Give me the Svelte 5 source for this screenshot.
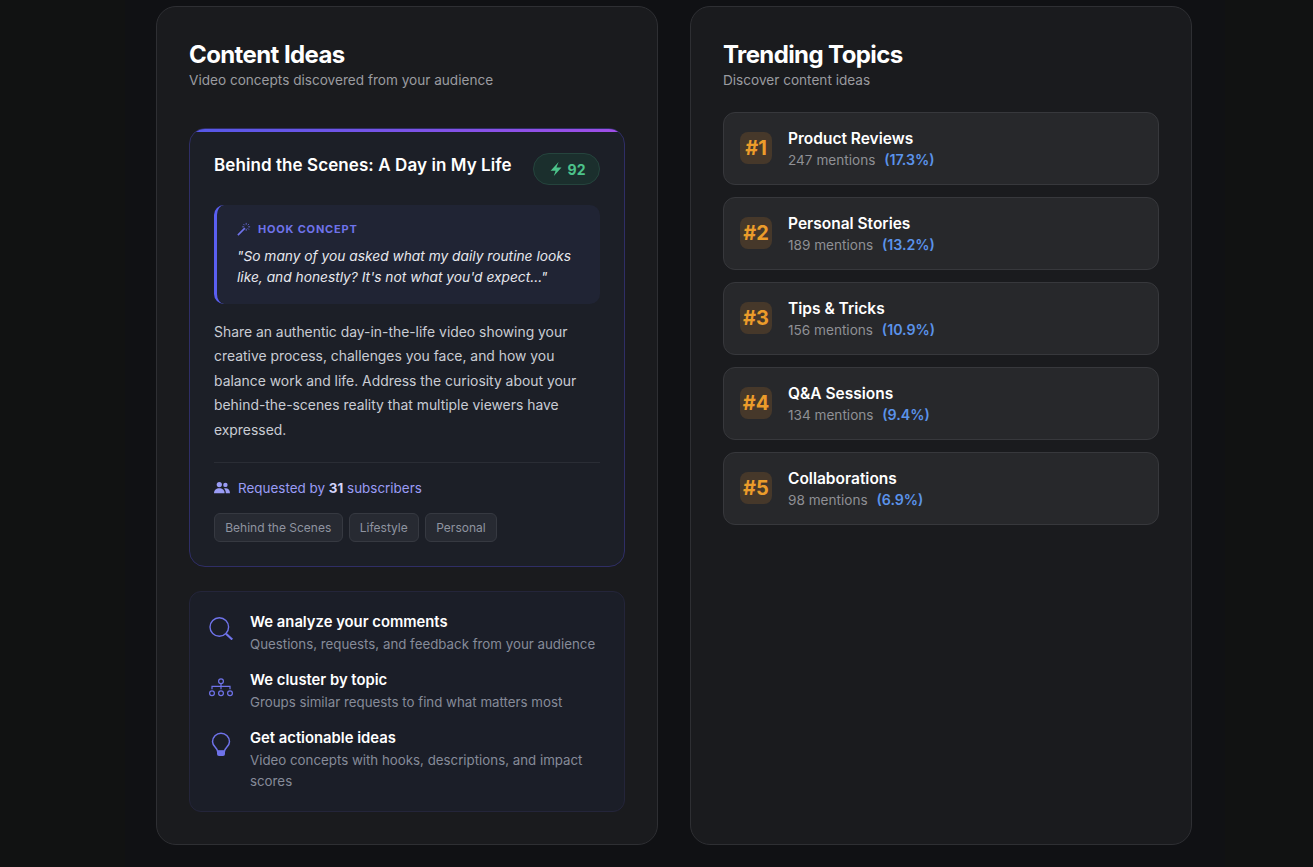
<script>
  const topics = [
    { rank: 1, name: "Product Reviews", mentions: 247, share: "17.3%" },
    { rank: 2, name: "Personal Stories", mentions: 189, share: "13.2%" },
    { rank: 3, name: "Tips & Tricks", mentions: 156, share: "10.9%" },
    { rank: 4, name: "Q&A Sessions", mentions: 134, share: "9.4%" },
    { rank: 5, name: "Collaborations", mentions: 98, share: "6.9%" },
  ];

  const tags = ["Behind the Scenes", "Lifestyle", "Personal"];

  const steps = [
    { icon: "search", title: "We analyze your comments", text: "Questions, requests, and feedback from your audience" },
    { icon: "cluster", title: "We cluster by topic", text: "Groups similar requests to find what matters most" },
    { icon: "bulb", title: "Get actionable ideas", text: "Video concepts with hooks, descriptions, and impact scores" },
  ];
</script>

<main class="page">
  <div class="columns">
    <section class="panel">
      <h2>Content Ideas</h2>
      <p class="sub">Video concepts discovered from your audience</p>

      <article class="idea">
        <div class="idea-head">
          <h3>Behind the Scenes: A Day in My Life</h3>
          <span class="score">
            <svg width="16" height="16" viewBox="0 0 16 16" fill="currentColor"><path d="M10.600 1 2.600 9.700h5L5.800 15 13.500 6.400H8.400z" /></svg>
            92
          </span>
        </div>

        <div class="hook">
          <div class="hook-label">
            <svg width="14" height="14" viewBox="0 0 16 16" fill="none" stroke="currentColor"><path d="M1 15 9 7" stroke-width="1.800" /><path d="M10.500 1v2.200M10.500 7.800V10M6 5.500h2.200M12.800 5.500H15M7.400 2.400l1.300 1.300M12.300 7.300l1.300 1.300M13.600 2.400l-1.300 1.300" stroke-width="0.900" /></svg>
            Hook Concept
          </div>
          <p>"So many of you asked what my daily routine looks like, and honestly? It's not what you'd expect..."</p>
        </div>

        <p class="desc">Share an authentic day-in-the-life video showing your creative process, challenges you face, and how you balance work and life. Address the curiosity about your behind-the-scenes reality that multiple viewers have expressed.</p>

        <div class="requested">
          <svg width="16" height="16" viewBox="0 0 16 16" fill="currentColor"><circle cx="5.300" cy="4.600" r="2.600" /><circle cx="11.400" cy="4.900" r="2.200" /><path d="M0 13.200C0 10 2.400 8.300 5.300 8.300S10.600 10 10.600 13.200z" /><path d="M11.800 13.200c0-1.900-.6-3.500-1.800-4.600.5-.2 1-.3 1.600-.3 2.500 0 4.400 1.600 4.400 4.900z" /></svg>
          <span>Requested by <b>31</b> subscribers</span>
        </div>

        <div class="tags">
          {#each tags as tag}
            <span class="tag">{tag}</span>
          {/each}
        </div>
      </article>

      <div class="how">
        {#each steps as step}
          <div class="step">
            <span class="step-icon">
              {#if step.icon === "search"}
                <svg width="24" height="24" viewBox="0 0 24 24" fill="none" stroke="currentColor"><circle cx="10.300" cy="11" r="9.300" stroke-width="1.400" /><path d="M17 17.800 23.300 23.500" stroke-width="2.200" /></svg>
              {:else if step.icon === "cluster"}
                <svg width="24" height="24" viewBox="0 0 24 24" fill="none" stroke="currentColor" stroke-width="1.200"><circle cx="12" cy="7.300" r="2.400" /><circle cx="3" cy="19.200" r="2.400" /><circle cx="12" cy="19.200" r="2.400" /><circle cx="21" cy="19.200" r="2.400" /><path d="M12 9.700v5.600M3 15.300v-3h18v3" /></svg>
              {:else}
                <svg width="24" height="24" viewBox="0 0 24 24" fill="none" stroke="currentColor"><path d="M8.500 19C8.300 15.800 3.500 14.200 3.500 9.800a8.500 8.500 0 0 1 17 0c0 4.400-4.800 6-5 9.200z" stroke-width="1.500" /><path d="M8 18.700h8v3.300a2 2 0 0 1-2 2h-4a2 2 0 0 1-2-2z" fill="currentColor" stroke="none" /></svg>
              {/if}
            </span>
            <div>
              <div class="step-title">{step.title}</div>
              <div class="step-text">{step.text}</div>
            </div>
          </div>
        {/each}
      </div>
    </section>

    <section class="panel">
      <h2>Trending Topics</h2>
      <p class="sub">Discover content ideas</p>

      <div class="topics">
        {#each topics as t}
          <div class="topic">
            <span class="rank">#{t.rank}</span>
            <div>
              <div class="topic-name">{t.name}</div>
              <div class="topic-meta">{t.mentions} mentions <span class="share">({t.share})</span></div>
            </div>
          </div>
        {/each}
      </div>
    </section>
  </div>
</main>

<style>
  :global(body) {
    margin: 0;
    background: #111212;
    font-family: Inter, "Liberation Sans", sans-serif;
    color: #fff;
  }
  .page {
    width: 1100px;
    height: 867px;
    margin-left: 125px;
    padding: 6px 32px 0 31px;
    box-sizing: border-box;
    background: #101114;
    overflow: hidden;
  }
  .columns {
    display: grid;
    grid-template-columns: 502px 502px;
    gap: 32px;
    height: 839px;
  }
  .panel {
    background: #1a1b1e;
    border: 1px solid #2e2f33;
    border-radius: 20px;
    padding: 33px 32px 32px;
    box-sizing: border-box;
  }
  h2 {
    margin: 0;
    font-size: 24px;
    line-height: 30px;
    font-weight: 700;
    letter-spacing: -0.6px;
  }
  .sub {
    margin: 0;
    font-size: 13.6px;
    line-height: 20px;
    color: #9a9ba0;
  }
  .idea {
    margin-top: 38px;
    height: 439px;
    box-sizing: border-box;
    padding: 24px;
    background: #1c1f27;
    border: 1px solid #2f2e66;
    border-radius: 16px;
    position: relative;
    overflow: hidden;
  }
  .idea::before {
    content: "";
    position: absolute;
    left: 0;
    right: 0;
    top: 0;
    height: 3px;
    background: linear-gradient(90deg, #5558e8, #a04ee8);
  }
  .idea-head {
    display: flex;
    justify-content: space-between;
    align-items: flex-start;
    gap: 16px;
  }
  h3 {
    margin: 0;
    font-size: 17px;
    line-height: 24px;
    font-weight: 600;
    letter-spacing: 0.08px;
    color: #fff;
  }
  .score {
    display: inline-flex;
    align-items: center;
    gap: 4px;
    height: 32px;
    box-sizing: border-box;
    padding: 0 13.5px;
    border: 1px solid #25443d;
    border-radius: 999px;
    background: #1b2f2d;
    color: #4cc38a;
    font-size: 14px;
    font-weight: 700;
  }
  .hook {
    margin-top: 20px;
    height: 99px;
    box-sizing: border-box;
    padding: 15px 20px;
    background: #202434;
    border-left: 3px solid #5a5ff0;
    border-radius: 10px;
  }
  .hook-label {
    display: flex;
    align-items: center;
    gap: 7px;
    font-size: 11px;
    line-height: 18px;
    font-weight: 700;
    letter-spacing: 0.8px;
    text-transform: uppercase;
    color: #6f73ea;
  }
  .hook p {
    margin: 8px 0 0;
    font-size: 13.75px;
    line-height: 21px;
    font-style: italic;
    color: #e7e8ee;
  }
  .desc {
    margin: 15.6px 0 0;
    font-size: 13.9px;
    line-height: 24.5px;
    color: #c9ccd4;
  }
  .requested {
    margin-top: 20px;
    padding-top: 15px;
    border-top: 1px solid #2a2d35;
    display: flex;
    align-items: center;
    gap: 8px;
    font-size: 13.44px;
    line-height: 20px;
    color: #9a9cf5;
  }
  .requested b {
    color: #d4d5fb;
    font-weight: 700;
  }
  .tags {
    margin-top: 15px;
    display: flex;
    gap: 6px;
  }
  .tag {
    height: 29px;
    box-sizing: border-box;
    padding: 0 10.25px;
    display: flex;
    align-items: center;
    font-size: 12px;
    color: #8f94a0;
    background: #272a32;
    border: 1px solid #363941;
    border-radius: 6px;
  }
  .how {
    margin-top: 24px;
    height: 221px;
    box-sizing: border-box;
    padding: 20px 20px 0;
    background: #1b1e28;
    border: 1px solid #24253a;
    border-radius: 12px;
    display: flex;
    flex-direction: column;
    gap: 15px;
  }
  .step {
    display: flex;
    gap: 17px;
  }
  .step-icon {
    flex: none;
    width: 24px;
    height: 24px;
    margin: 4px 0 0 -1px;
    color: #6f73ea;
  }
  .step-title {
    font-size: 14.8px;
    line-height: 21px;
    font-weight: 600;
    color: #fff;
  }
  .step-text {
    margin-top: 1px;
    font-size: 13.3px;
    line-height: 21px;
    color: #868b99;
  }
  .topics {
    margin-top: 22px;
    display: flex;
    flex-direction: column;
    gap: 12px;
  }
  .topic {
    height: 73px;
    box-sizing: border-box;
    display: flex;
    align-items: center;
    gap: 16px;
    padding: 0 16px;
    background: #27282b;
    border: 1px solid #37383c;
    border-radius: 12px;
  }
  .rank {
    flex: none;
    width: 32px;
    height: 32px;
    margin-top: -1px;
    display: flex;
    align-items: center;
    justify-content: center;
    border-radius: 8px;
    background: #46382a;
    color: #ec9c2a;
    font-size: 20px;
    font-weight: 700;
  }
  .topic-name {
    font-size: 15.5px;
    line-height: 22px;
    font-weight: 600;
    color: #fff;
  }
  .topic-meta {
    font-size: 13.6px;
    line-height: 20px;
    color: #8f9095;
  }
  .share {
    margin-left: 5px;
    font-size: 14.2px;
    color: #5b93ea;
    font-weight: 600;
  }
</style>
